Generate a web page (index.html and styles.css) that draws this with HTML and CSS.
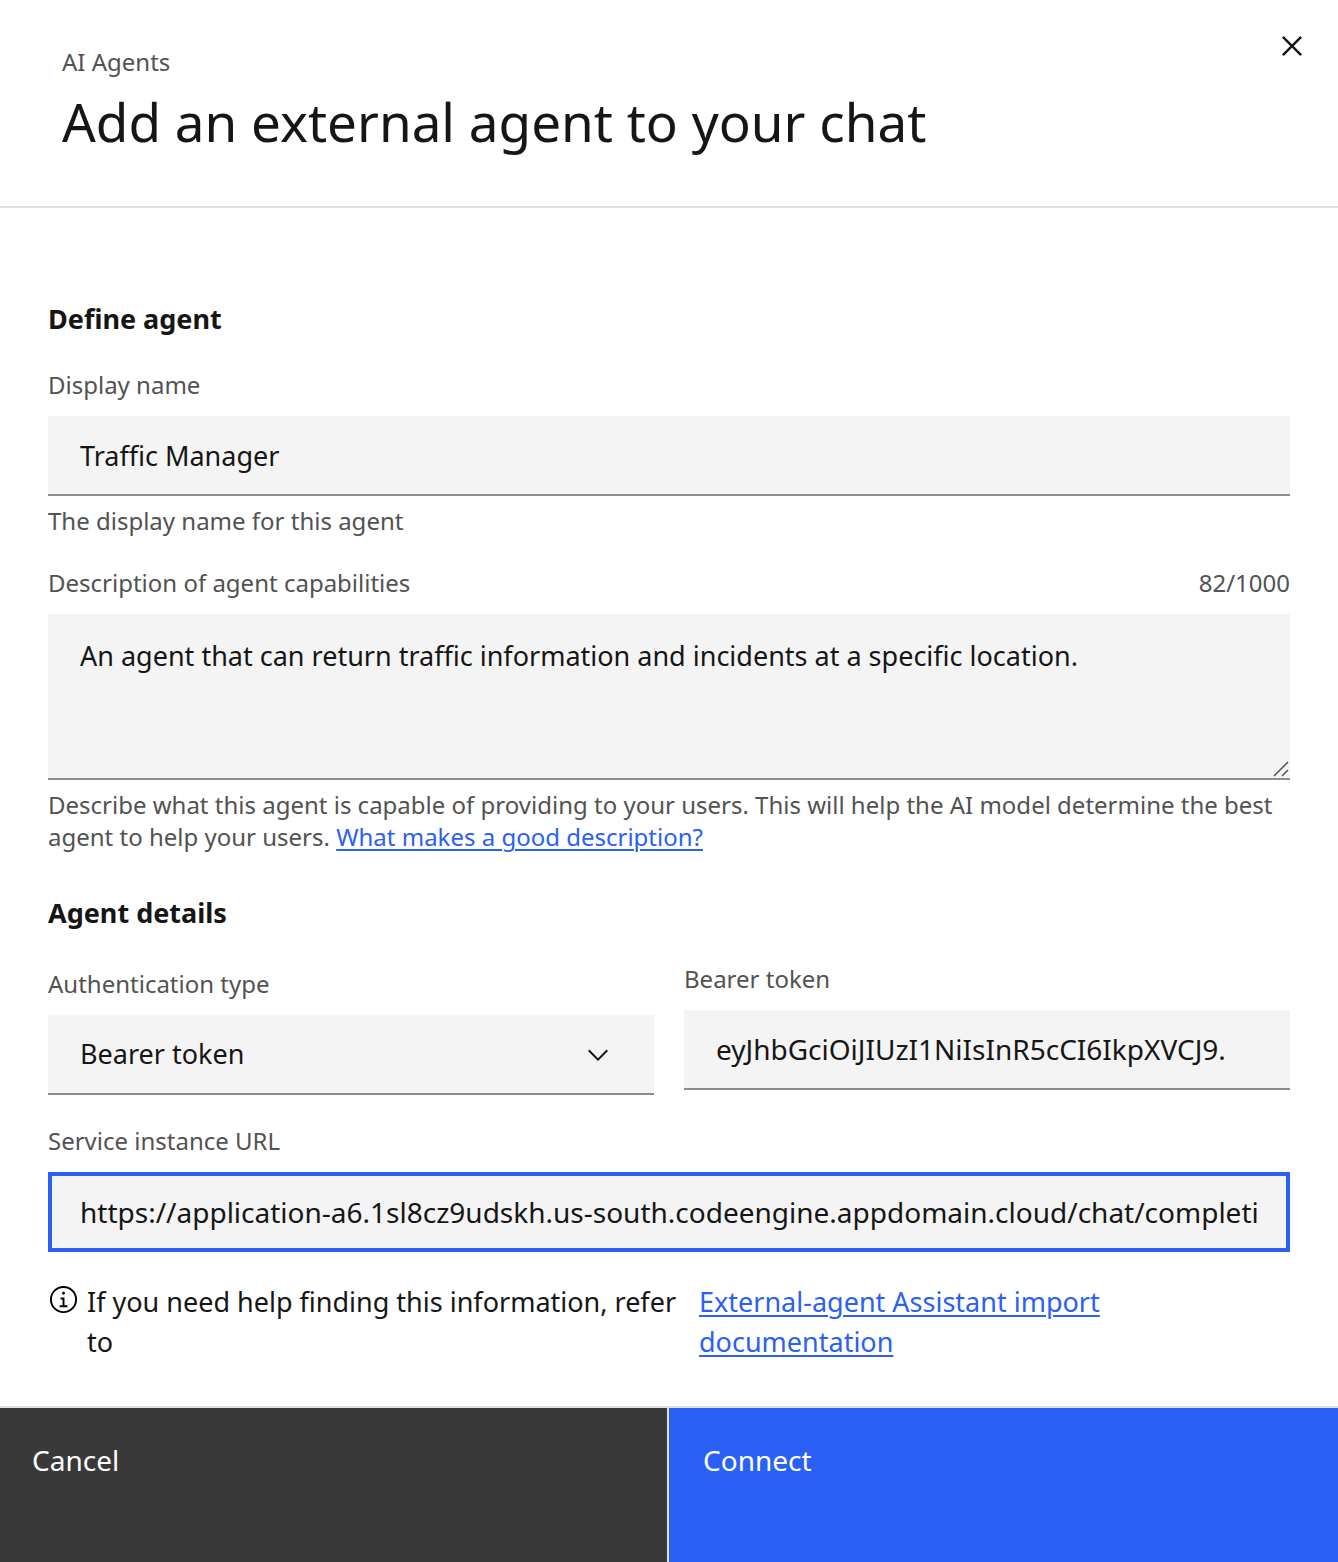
FILE: index.html
```html
<!DOCTYPE html>
<html lang="en">
<head>
<meta charset="utf-8">
<meta name="viewport" content="width=device-width, initial-scale=1">
<title>Add an external agent to your chat</title>
<link rel="stylesheet" href="styles.css">
</head>
<body>
<form class="modal" aria-labelledby="modal-title">
  <header class="modal-header">
    <div class="modal-heading">
      <p class="eyebrow">AI Agents</p>
      <h1 class="title" id="modal-title">Add an external agent to your chat</h1>
    </div>
    <button class="close" type="button" aria-label="Close">
      <svg viewBox="0 0 32 32" aria-hidden="true"><path d="M24 9.4 22.6 8 16 14.6 9.4 8 8 9.4l6.6 6.6L8 22.6 9.4 24l6.6-6.6 6.6 6.6 1.4-1.4-6.6-6.6z"/></svg>
    </button>
  </header>

  <main class="modal-body">
    <section class="section">
      <h2 class="section-title">Define agent</h2>
      <div class="field">
        <label class="label" for="name">Display name</label>
        <input class="control" id="name" type="text" value="Traffic Manager" aria-describedby="name-help">
        <p class="helper" id="name-help">The display name for this agent</p>
      </div>
      <div class="field">
        <div class="label-row">
          <label class="label" for="description">Description of agent capabilities</label>
          <span class="label">82/1000</span>
        </div>
        <div class="area-wrap">
          <textarea class="control area" id="description" maxlength="1000" aria-describedby="description-help">An agent that can return traffic information and incidents at a specific location.</textarea>
          <svg class="grip" viewBox="0 0 16 16" aria-hidden="true"><path d="M1 15 15 1M9 15l6-6"/></svg>
        </div>
        <p class="helper" id="description-help">Describe what this agent is capable of providing to your users. This will help the AI model determine the best agent to help your users. <a class="link" href="#description-guide">What makes a good description?</a></p>
      </div>
    </section>

    <section class="section">
      <h2 class="section-title">Agent details</h2>
      <div class="columns">
        <div class="field field-select">
          <label class="label" for="auth">Authentication type</label>
          <div class="select-wrap">
            <select class="control" id="auth"><option>Bearer token</option></select>
            <svg class="chevron" viewBox="0 0 16 16" aria-hidden="true"><path d="M8 11 3 6l.7-.7L8 9.6l4.3-4.3.7.7z"/></svg>
          </div>
        </div>
        <div class="field">
          <label class="label" for="token">Bearer token</label>
          <input class="control code" id="token" type="text" value="eyJhbGciOiJIUzI1NiIsInR5cCI6IkpXVCJ9.">
        </div>
      </div>
      <div class="field">
        <label class="label" for="url">Service instance URL</label>
        <input class="control code active" id="url" type="text" value="https://application-a6.1sl8cz9udskh.us-south.codeengine.appdomain.cloud/chat/completions">
      </div>
      <div class="note">
        <svg class="info" viewBox="0 0 32 32" aria-hidden="true"><path d="M17 22v-8h-4v2h2v6h-3v2h8v-2zM16 8a1.500 1.500 0 1 0 0 3 1.500 1.500 0 0 0 0-3z"/><path d="M16 30a14 14 0 1 1 14-14 14 14 0 0 1-14 14zm0-26a12 12 0 1 0 12 12A12 12 0 0 0 16 4z"/></svg>
        <p class="note-text">If you need help finding this information, refer to</p>
        <p class="note-link"><a class="link" href="#import-docs">External-agent Assistant import documentation</a></p>
      </div>
    </section>
  </main>

  <footer class="modal-footer">
    <button class="button secondary" type="button">Cancel</button>
    <button class="button primary" type="submit">Connect</button>
  </footer>
</form>
</body>
</html>
```

FILE: styles.css
```css
:root {
  --ink: #161616;
  --muted: #525252;
  --field: #f4f4f4;
  --line: #e0e0e0;
  --rule: #8d8d8d;
  --blue: #2b60f6;
}

*,
*::before,
*::after {
  box-sizing: border-box;
}

body {
  margin: 0;
  background: #fff;
  color: var(--ink);
  font-family: "Noto Sans", sans-serif;
  font-size: 27px;
  line-height: 40px;
}

h1,
h2,
p {
  margin: 0;
}

.modal {
  display: flex;
  flex-direction: column;
  min-height: 100vh;
}

.modal-header {
  display: flex;
  justify-content: space-between;
  align-items: flex-start;
  padding: 0 0 48px 62px;
  border-bottom: 2px solid var(--line);
}

.modal-heading {
  padding-top: 46px;
}

.eyebrow,
.label,
.helper {
  color: var(--muted);
  font-size: 24px;
  line-height: 32px;
}

.title {
  margin-top: 8px;
  font-size: 53px;
  font-weight: 400;
  line-height: 72px;
}

.close {
  width: 92px;
  height: 92px;
  padding: 26px;
  border: 0;
  background: none;
  cursor: pointer;
}

.close svg {
  display: block;
  width: 40px;
  height: 40px;
  fill: var(--ink);
}

.modal-body {
  flex: 1;
  display: flex;
  flex-direction: column;
  gap: 40px;
  padding: 91px 48px 40px;
}

.section {
  display: flex;
  flex-direction: column;
  gap: 30px;
}

.section-title {
  font-size: 27px;
  font-weight: 700;
  line-height: 40px;
}

.field {
  display: flex;
  flex-direction: column;
}

.label {
  margin-bottom: 15px;
}

.label-row {
  display: flex;
  justify-content: space-between;
}

.helper {
  margin-top: 9px;
}

.control {
  display: block;
  width: 100%;
  height: 80px;
  margin: 0;
  padding: 0 32px;
  border: 0;
  border-bottom: 2px solid var(--rule);
  border-radius: 0;
  outline: 0;
  background: var(--field);
  color: var(--ink);
  font: inherit;
  appearance: none;
}

.code {
  font-size: 28px;
}

.area {
  height: 166px;
  padding: 22px 32px;
  resize: none;
}

.active {
  padding: 0 28px;
  border: 4px solid var(--blue);
}

.area-wrap,
.select-wrap {
  position: relative;
}

.grip {
  position: absolute;
  right: 1px;
  bottom: 3px;
  width: 16px;
  height: 16px;
  fill: none;
  stroke: var(--muted);
  stroke-width: 1.5;
}

.chevron {
  position: absolute;
  top: 24px;
  right: 40px;
  width: 32px;
  height: 32px;
  fill: var(--ink);
  pointer-events: none;
}

.columns {
  display: grid;
  grid-template-columns: 1fr 1fr;
  gap: 30px;
}

.field-select {
  padding-top: 5px;
}

.link {
  color: var(--blue);
  text-decoration-thickness: 2px;
  text-underline-offset: 3px;
}

.note {
  display: flex;
}

.info {
  flex: none;
  width: 31px;
  height: 31px;
  margin: 2px 8px 0 0;
}

.note-text {
  flex: 0 1 612px;
}

.note-link {
  flex: 0 1 440px;
}

.modal-footer {
  display: grid;
  grid-template-columns: 1fr 1fr;
  border-top: 2px solid var(--line);
}

.button {
  display: flex;
  align-items: flex-start;
  height: 154px;
  padding: 32px;
  border: 0;
  color: #fff;
  font: inherit;
  font-size: 28px;
  cursor: pointer;
}

.secondary {
  border-right: 2px solid var(--line);
  background: #393939;
}

.primary {
  padding-left: 34px;
  background: var(--blue);
}
```
